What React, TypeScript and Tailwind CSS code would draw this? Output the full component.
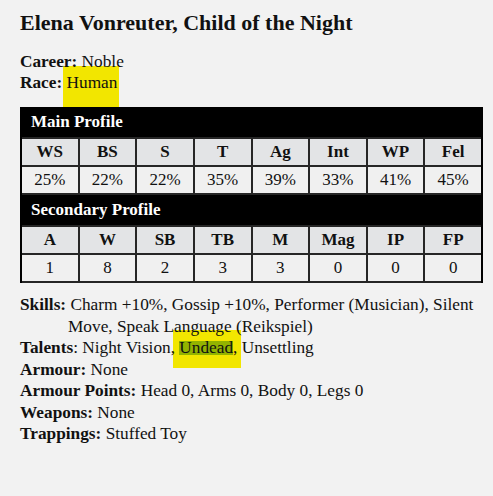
const main = [
  ["WS", "25%"],
  ["BS", "22%"],
  ["S", "22%"],
  ["T", "35%"],
  ["Ag", "39%"],
  ["Int", "33%"],
  ["WP", "41%"],
  ["Fel", "45%"],
]

const secondary = [
  ["A", "1"],
  ["W", "8"],
  ["SB", "2"],
  ["TB", "3"],
  ["M", "3"],
  ["Mag", "0"],
  ["IP", "0"],
  ["FP", "0"],
]

function Profile({ title, stats }: { title: string; stats: string[][] }) {
  return (
    <div>
      <div className="h-[30px] pl-[9px] flex items-center text-white font-bold text-[17px]">{title}</div>
      <div className="grid grid-cols-8 gap-[2px] bg-[#262626] py-[2px]">
        {stats.map(([k]) => (
          <div key={k} className="h-[26px] bg-[#e3e4e6] flex items-center justify-center font-bold text-[17px]">
            {k}
          </div>
        ))}
        {stats.map(([k, v]) => (
          <div key={k + "v"} className="h-[26px] bg-[#f0f0f0] flex items-center justify-center text-[17px]">
            {v}
          </div>
        ))}
      </div>
    </div>
  )
}

export default function App() {
  return (
    <div
      className="w-[493px] h-[496px] bg-[#f2f2f2] text-[#111] pl-5 pr-[10px] pt-[7px] overflow-hidden"
      style={{ fontFamily: '"Liberation Serif", serif' }}
    >
      <h1 className="text-[22px] leading-[32px] font-bold">Elena Vonreuter, Child of the Night</h1>
      <div className="relative z-0 mt-[12px] text-[17.3px] leading-[21px]">
        <div>
          <b>Career:</b> Noble
        </div>
        <div>
          <b>Race:</b>{" "}
          <span className="relative">
            <span className="absolute -z-10 left-[-4px] right-[-2px] top-[-7px] bottom-[-15px] bg-[#f2e600]" />
            Human
          </span>
        </div>
      </div>
      <div className="mt-[14px] bg-black px-[2px]">
        <Profile title="Main Profile" stats={main} />
        <Profile title="Secondary Profile" stats={secondary} />
      </div>
      <div className="relative z-0 mt-[11px] pr-[8px] text-[17.3px] leading-[21.5px]">
        <p className="pl-[48px] -indent-[48px]">
          <b>Skills:</b> Charm +10%, Gossip +10%, Performer (Musician), Silent Move, Speak Language (Reikspiel)
        </p>
        <p>
          <b>Talents</b>: Night Vision,{" "}
          <span className="relative">
            <span className="absolute -z-10 left-[-6px] right-[-8px] top-[-8px] bottom-[-11px] bg-[#f2e600]" />
            <span className="inline-block h-[14px] leading-[14px] bg-[#93b300]">Undead</span>
          </span>
          , Unsettling
        </p>
        <p>
          <b>Armour:</b> None
        </p>
        <p>
          <b>Armour Points:</b> Head 0, Arms 0, Body 0, Legs 0
        </p>
        <p>
          <b>Weapons:</b> None
        </p>
        <p>
          <b>Trappings:</b> Stuffed Toy
        </p>
      </div>
    </div>
  )
}
